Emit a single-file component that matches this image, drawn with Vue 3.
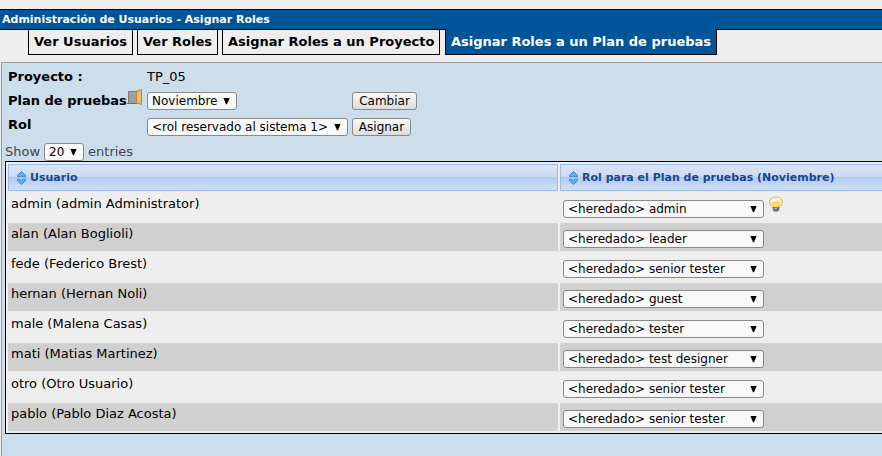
<script setup>
const tabs = ['Ver Usuarios', 'Ver Roles', 'Asignar Roles a un Proyecto', 'Asignar Roles a un Plan de pruebas']
const activeTab = 3

const users = [
  { name: 'admin (admin Administrator)', role: 'admin', hint: true },
  { name: 'alan (Alan Boglioli)', role: 'leader' },
  { name: 'fede (Federico Brest)', role: 'senior tester' },
  { name: 'hernan (Hernan Noli)', role: 'guest' },
  { name: 'male (Malena Casas)', role: 'tester' },
  { name: 'mati (Matias Martinez)', role: 'test designer' },
  { name: 'otro (Otro Usuario)', role: 'senior tester' },
  { name: 'pablo (Pablo Diaz Acosta)', role: 'senior tester' },
]
const columns = ['Usuario', 'Rol para el Plan de pruebas (Noviembre)']
</script>

<template>
  <div class="page">
    <h1 class="title">Administración de Usuarios - Asignar Roles</h1>
    <nav class="tabs">
      <a v-for="(t, i) in tabs" :key="t" class="tab" :class="{ active: i === activeTab }">{{ t }}</a>
    </nav>

    <main class="panel">
      <div class="form">
        <div class="line project">
          <b class="label">Proyecto :</b>
          <span>TP_05</span>
        </div>
        <div class="line">
          <b class="label plan">Plan de pruebas
            <svg class="door" width="16" height="17" viewBox="0 0 16 17">
              <path d="M1.5 14.5V2.5H10V14.5" fill="#a0a0a0" stroke="#77787a" />
              <path d="M0 14.5H10" stroke="#7d6a58" />
              <path d="M9.5 2.2L14.5 .6V15.5L9.5 14Z" fill="#dda25b" stroke="#b9834b" />
              <path d="M10.2 3L13.8 1.8V14.4L10.2 13.2Z" fill="#ecbd80" />
              <path d="M10.3 8H12.7M11.5 7V9" stroke="#ffc12c" />
            </svg>
          </b>
          <span class="select plan-select">Noviembre<svg class="arrow" width="7" height="7"><path d="M.4 0H6.6L4 6.2H3Z" /></svg></span>
          <button class="button change">Cambiar</button>
        </div>
        <div class="line role">
          <b class="label">Rol</b>
          <span class="select role-select">&lt;rol reservado al sistema 1&gt;<svg class="arrow" width="7" height="7"><path d="M.4 0H6.6L4 6.2H3Z" /></svg></span>
          <button class="button assign">Asignar</button>
        </div>
      </div>

      <div class="length">
        Show
        <span class="select count">20<svg class="arrow" width="7" height="7"><path d="M.4 0H6.6L4 6.2H3Z" /></svg></span>
        entries
      </div>

      <div class="table">
        <div class="row">
          <div v-for="c in columns" :key="c" class="head">
            <svg width="9" height="14" viewBox="0 0 9 14">
              <path d="M4.5 .6L8.3 4.1V5.8H6.8L4.5 5.2L2.2 5.8H.7V4.1Z" fill="#5fb3f2" stroke="#2f7ed2" stroke-width=".9" />
              <path d="M4.5 13.4L8.3 9.9V8.2H6.8L4.5 9.3L2.2 8.2H.7V9.9Z" fill="#5fb3f2" stroke="#2f7ed2" stroke-width=".9" />
            </svg>
            {{ c }}
          </div>
        </div>
        <div v-for="u in users" :key="u.name" class="row data">
          <div class="cell name">{{ u.name }}</div>
          <div class="cell role-cell">
            <span class="select user-role">&lt;heredado&gt; {{ u.role }}<svg class="arrow" width="7" height="7"><path d="M.4 0H6.6L4 6.2H3Z" /></svg></span>
            <svg v-if="u.hint" class="bulb" width="16" height="16" viewBox="0 0 16 16">
              <path d="M4.5 11.5C4 9.5 1.5 9 1.5 5.9C1.5 3 4 1.2 8 1.2S14.5 3 14.5 5.9C14.5 9 12 9.5 11.5 11.5Z" fill="#ffe9ac" stroke="#e0a866" />
              <path d="M2.5 6C3 3 5.5 2 8.5 2C11 2 12.5 3 13 4.5C10 3.5 6 4 4 7Z" fill="#fffdf0" />
              <path d="M4.8 6.8H11.2L10.7 11H5.3Z" fill="#ffe95c" stroke="#e8b730" stroke-width=".8" />
              <path d="M4.7 11.2H11.3V13.8L10 15.6H6L4.7 13.8Z" fill="#6c6a66" />
              <path d="M5.8 12.7H9" stroke="#c0c0bc" />
            </svg>
          </div>
        </div>
      </div>
    </main>
  </div>
</template>

<style>
body {
  margin: 0;
  background: #eee;
}
</style>

<style scoped>
.page {
  box-sizing: border-box;
  height: 456px;
  padding-top: 9px;
  overflow: hidden;
  font: 13px/16px "DejaVu Sans", sans-serif;
  color: #000;
}
.title {
  box-sizing: border-box;
  height: 21px;
  margin: 0;
  padding-left: 2px;
  border: solid #000;
  border-width: 1px 0;
  background: #005498;
  color: #fff;
  font-size: 11px;
  line-height: 19px;
}
.tabs {
  display: flex;
  gap: 4px;
  margin: -1px 0 0 28px;
}
.tab {
  box-sizing: border-box;
  height: 26px;
  padding: 0 5px;
  border: 1px solid #000;
  font-weight: bold;
  line-height: 24px;
  white-space: nowrap;
}
.tab.active {
  margin-left: 0.5px;
  padding-right: 4.5px;
  border-top: 0;
  padding-top: 1px;
  background: #005498;
  color: #fff;
}
.panel {
  box-sizing: border-box;
  height: 420px;
  margin: 7px 0 0 1px;
  padding: 5px 0 0 3px;
  border: solid #999;
  border-width: 1px 0 0 1px;
  background: #ccddec;
}
.form {
  padding-left: 3px;
}
.line {
  display: flex;
  height: 24px;
}
.project {
  line-height: 18px;
}
.line.role {
  height: 25px;
}
.label {
  flex: none;
  width: 139px;
  line-height: 18px;
}
.label.plan {
  display: flex;
}
.door {
  flex: none;
  margin: -3px 0 0 0.5px;
}
.select {
  box-sizing: border-box;
  display: inline-flex;
  align-items: center;
  justify-content: space-between;
  height: 18px;
  padding: 0 5px 0 4px;
  border: 1px solid #888;
  border-radius: 3px;
  background: #f8f8f8;
  color: #000;
  font-size: 12px;
  line-height: 16px;
  white-space: nowrap;
}
.arrow {
  flex: none;
  margin-right: 1px;
}
.plan-select {
  width: 90px;
}
.role-select {
  width: 201px;
  margin-top: 2px;
}
.button {
  box-sizing: border-box;
  height: 18px;
  padding: 0;
  border: 1px solid #888;
  border-radius: 3px;
  background: linear-gradient(#f8f8f8, #ddd);
  color: #000;
  font: 12px/16px "DejaVu Sans", sans-serif;
}
.change {
  width: 65px;
  margin-left: 115px;
}
.assign {
  width: 59px;
  margin: 2px 0 0 4px;
}
.length {
  box-sizing: border-box;
  display: flex;
  gap: 4px;
  height: 20px;
  padding-top: 2px;
  line-height: 18px;
  color: #444;
}
.count {
  width: 40px;
}
.table {
  display: grid;
  gap: 2px;
  width: 900px;
  padding: 2px;
  border: 1px solid #000;
  background: #eee;
}
.row {
  display: grid;
  grid-template-columns: 550px 1fr;
  gap: 2px;
}
.head {
  box-sizing: border-box;
  display: flex;
  align-items: center;
  gap: 4px;
  height: 27px;
  padding-left: 8px;
  border: 1px solid #99bbe8;
  background: linear-gradient(#dae6f6 0, #cadbf3 46%, #a9c6ec 47%, #b3ccee 51%, #b9d0f0 60%, #cfdff5 100%);
  color: #1a448f;
  font-size: 11px;
  font-weight: bold;
}
.cell {
  box-sizing: border-box;
  display: flex;
  height: 28px;
  padding: 3px;
}
.data:nth-child(odd) .cell {
  background: #d0d0d0;
}
.role-cell {
  padding-top: 7px;
}
.user-role {
  width: 201px;
}
.bulb {
  margin: -4px 0 0 4px;
}
</style>
